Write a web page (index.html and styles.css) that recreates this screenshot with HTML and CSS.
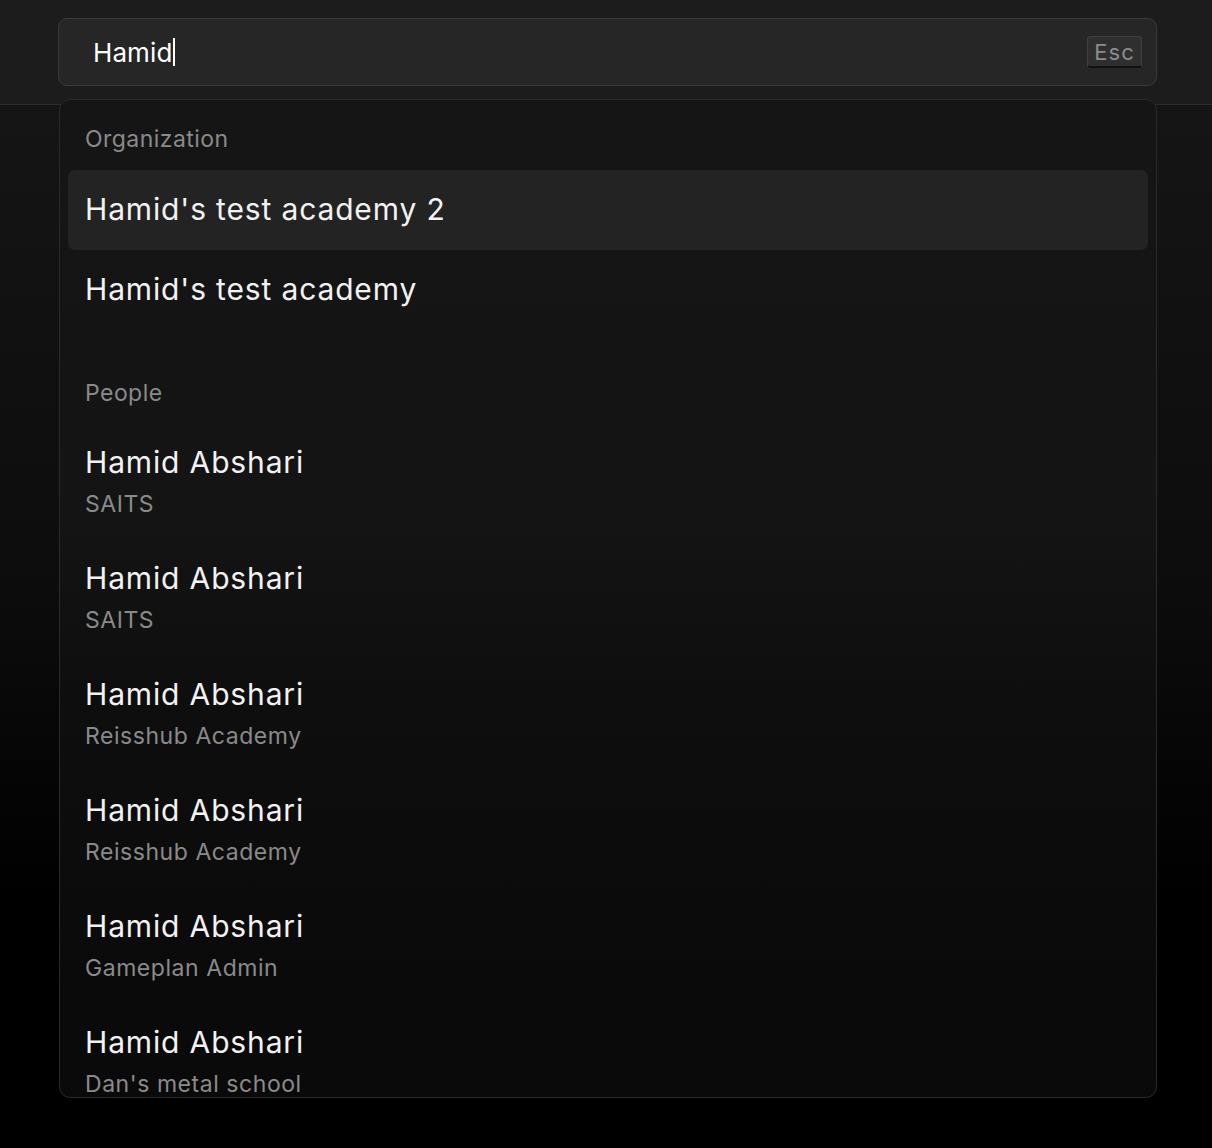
FILE: index.html
```html
<!DOCTYPE html>
<html lang="en">
<head>
<meta charset="utf-8">
<title>Search</title>
<link rel="stylesheet" href="styles.css">
</head>
<body>
<div class="page">
  <header class="topbar">
    <div class="search">
      <div class="search-text">Hamid<span class="caret"></span></div>
      <kbd class="esc">Esc</kbd>
    </div>
  </header>
  <div class="dropdown">
    <section class="group">
      <div class="group-label">Organization</div>
      <div class="item selected">Hamid's test academy 2</div>
      <div class="item">Hamid's test academy</div>
    </section>
    <section class="group people">
      <div class="group-label">People</div>
      <div class="person"><div class="name">Hamid Abshari</div><div class="sub">SAITS</div></div>
      <div class="person"><div class="name">Hamid Abshari</div><div class="sub">SAITS</div></div>
      <div class="person"><div class="name">Hamid Abshari</div><div class="sub">Reisshub Academy</div></div>
      <div class="person"><div class="name">Hamid Abshari</div><div class="sub">Reisshub Academy</div></div>
      <div class="person"><div class="name">Hamid Abshari</div><div class="sub">Gameplan Admin</div></div>
      <div class="person"><div class="name">Hamid Abshari</div><div class="sub">Dan's metal school</div></div>
    </section>
  </div>
</div>
</body>
</html>
```
FILE: styles.css
```css
* { box-sizing: border-box; }
html, body { margin: 0; padding: 0; }
body {
  font-family: Inter, "Noto Sans", sans-serif;
  background: #000;
  color: #f2f2f2;
  width: 1212px;
  height: 1148px;
  overflow: hidden;
}
.page {
  position: relative;
  height: 1148px;
  background: linear-gradient(180deg, #151515 0px, #151515 110px, #0c0c0c 600px, #000 900px);
}
.topbar {
  height: 105px;
  background: #1c1c1c;
  border-bottom: 1px solid #2c2c2c;
  padding: 18px 0 0 58px;
}
.search {
  width: 1099px;
  height: 68px;
  background: #262626;
  border: 1px solid #393939;
  border-radius: 9px;
  display: flex;
  align-items: center;
  justify-content: space-between;
  padding: 0 14px 0 34px;
}
.search-text {
  font-size: 26px;
  color: #ffffff;
  display: flex;
  align-items: center;
  letter-spacing: 0.1px;
}
.caret {
  display: inline-block;
  width: 2px;
  height: 28px;
  background: #fff;
  margin-left: 1px;
}
.esc {
  font-family: Inter, "Noto Sans", sans-serif;
  font-size: 22px;
  color: #8c8c8c;
  background: #2f2f2f;
  border: 1px solid #404040;
  border-bottom: 2px solid #111;
  border-radius: 4px;
  height: 32px;
  width: 55px;
  display: flex;
  align-items: center;
  justify-content: center;
  letter-spacing: 1px;
}
.dropdown {
  position: absolute;
  left: 59px;
  top: 99px;
  width: 1098px;
  height: 999px;
  border: 1px solid #2a2a2a;
  border-radius: 11px;
  background: linear-gradient(180deg, #151515 0px, #141414 420px, #0e0e0e 600px, #0a0a0a 900px);
  padding: 8px;
  overflow: hidden;
}
.group-label {
  font-size: 23px;
  line-height: 32px;
  color: #8a8a8a;
  padding: 15px 17px;
  letter-spacing: 0.45px;
}
.item {
  height: 80px;
  display: flex;
  align-items: center;
  padding: 0 17px 2px;
  font-size: 30px;
  letter-spacing: 0.85px;
  border-radius: 7px;
}
.item.selected {
  background: #232323;
}
.people {
  margin-top: 32px;
}
.person {
  height: 116px;
  padding: 18px 17px 0;
}
.name {
  font-size: 30px;
  line-height: 40px;
  letter-spacing: 0.85px;
}
.sub {
  font-size: 23px;
  line-height: 30px;
  margin-top: 7px;
  color: #8a8a8a;
  letter-spacing: 0.55px;
}
```
